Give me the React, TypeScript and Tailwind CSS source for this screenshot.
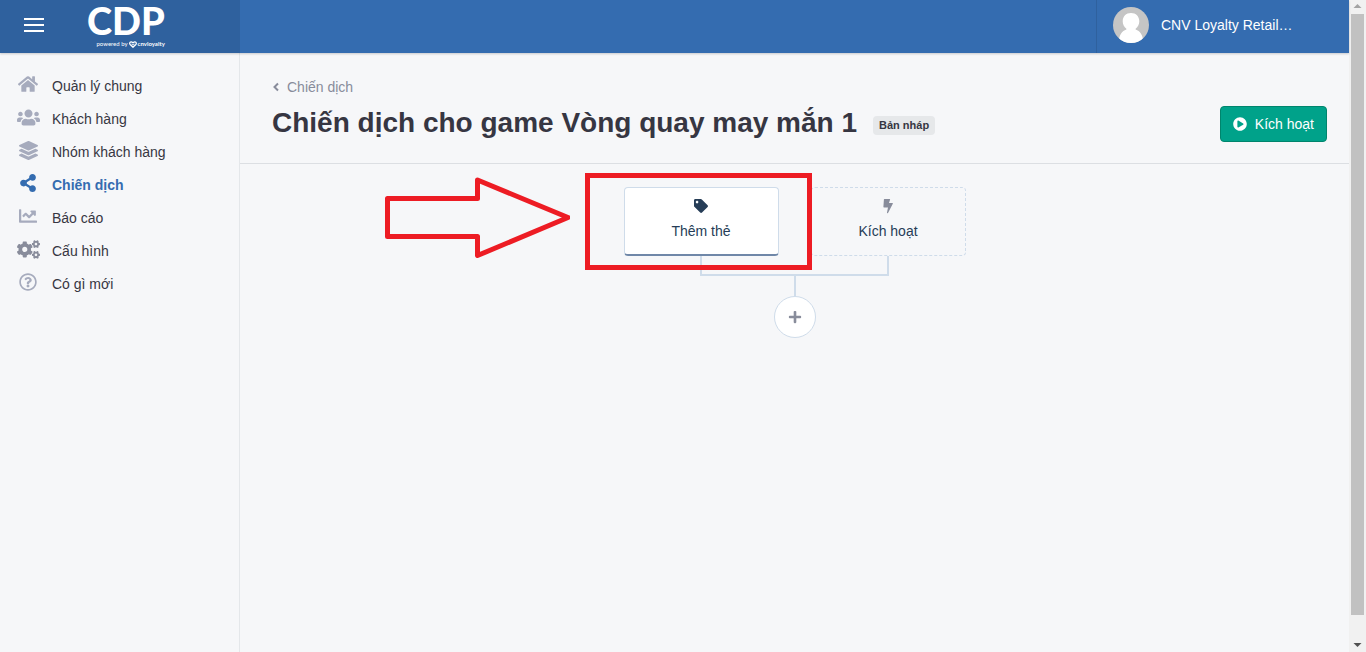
import React from "react";
import {
  FaHome,
  FaUsers,
  FaLayerGroup,
  FaShareAlt,
  FaChartLine,
  FaCogs,
  FaRegQuestionCircle,
  FaTag,
  FaPlus,
  FaPlayCircle,
} from "react-icons/fa";
import type { IconType } from "react-icons";

type NavItem = { label: string; icon: IconType; iconClass: string; active?: boolean };

const navItems: NavItem[] = [
  { label: "Quản lý chung", icon: FaHome, iconClass: "size-5 text-[#a6abbd]" },
  { label: "Khách hàng", icon: FaUsers, iconClass: "size-[23px] text-[#a6abbd]" },
  { label: "Nhóm khách hàng", icon: FaLayerGroup, iconClass: "size-[19px] text-[#a6abbd]" },
  { label: "Chiến dịch", icon: FaShareAlt, iconClass: "size-[18px] text-[#346cb0]", active: true },
  { label: "Báo cáo", icon: FaChartLine, iconClass: "size-[18px] text-[#a6abbd]" },
  { label: "Cấu hình", icon: FaCogs, iconClass: "size-[23px] text-[#888c9b]" },
  { label: "Có gì mới", icon: FaRegQuestionCircle, iconClass: "size-[18px] text-[#a6abbd]" },
];

function Logo() {
  return (
    <a href="#" className="flex flex-col items-end font-['Lato',sans-serif] text-white">
      <span className="text-[38px] leading-10 font-black">CDP</span>
      <span className="flex items-center text-[6px] leading-[8px]">
        powered by
        <svg viewBox="0 0 16 14" className="mx-px h-[7px] w-2" aria-hidden>
          <path
            d="M8 12.500 2.300 7C.5 5 1.200 2 4 1.700c1.800-.1 3 .9 4 2 1-1.100 2.200-2.100 4-2C14.800 2 15.500 5 13.700 7z"
            fill="none"
            stroke="#fff"
            strokeWidth="2.500"
          />
          <path d="M5 5.500 8 8.500l3-3" fill="none" stroke="#fff" strokeWidth="2" />
        </svg>
        <b className="font-bold">cnvloyalty</b>
      </span>
    </a>
  );
}

function Header() {
  return (
    <header className="relative z-10 flex h-[53px] bg-[#346cb0] shadow-[0_1px_2px_rgba(20,20,31,0.2)]">
      <div className="flex w-60 shrink-0 items-center bg-[#2f619e] pl-6">
        <button type="button" aria-label="Menu" className="flex w-5 flex-col gap-1 pb-[3px]">
          <span className="h-0.5 w-5 bg-white" />
          <span className="h-0.5 w-5 bg-white" />
          <span className="h-0.5 w-5 bg-white" />
        </button>
        <div className="ml-[43px] pb-[5px]">
          <Logo />
        </div>
      </div>
      <button
        type="button"
        className="ml-auto flex w-[253px] items-center gap-3 border-l border-[#2f619e] pb-[3px] pl-4 text-left text-sm font-medium text-white"
      >
        <svg viewBox="0 0 36 36" className="size-9 shrink-0 rounded-full" aria-hidden>
          <rect width="36" height="36" fill="#c5c5c5" />
          <path
            d="M18 6c-5 0-8.300 3.500-8.300 8.300 0 3.200 1.400 5.700 3.700 7.400v.8C9 24 6 28 5.500 36h25c-.5-8-3.500-12-7.900-13.500v-.8c2.300-1.700 3.700-4.200 3.700-7.400C26.300 9.500 23 6 18 6z"
            fill="#fff"
          />
        </svg>
        <span>CNV Loyalty Retail…</span>
      </button>
    </header>
  );
}

function Sidebar() {
  return (
    <nav className="w-60 shrink-0 border-r border-[#e4e7ea] pt-4">
      <ul>
        {navItems.map(({ label, icon: Icon, iconClass, active }) => (
          <li key={label}>
            <a
              href="#"
              className={
                active
                  ? "flex h-[33px] items-center pl-4 font-bold text-[#346cb0]"
                  : "flex h-[33px] items-center pl-4 text-[#363642]"
              }
            >
              <span className="mr-3 flex w-6 justify-center pb-[3px]">
                <Icon className={iconClass} aria-hidden />
              </span>
              {label}
            </a>
          </li>
        ))}
      </ul>
    </nav>
  );
}

function BoltIcon() {
  return (
    <svg viewBox="0 0 10 16" className="h-4 w-[10px]" aria-hidden>
      <path
        d="M1.400 1h5.200c.4 0 .6.3.5.6L6 5h3.300c.5 0 .7.4.5.8L5 14.900c-.3.600-1.200.3-1-.3L5 9.500H1c-.4 0-.6-.3-.6-.7L.9 1.500c0-.3.2-.5.500-.5z"
        fill="#888c9b"
      />
    </svg>
  );
}

function Annotation() {
  return (
    <>
      <div className="pointer-events-none absolute -top-[14px] -left-[39px] h-[97px] w-[227px] border-[5px] border-[#ed1c24]" />
      <svg
        viewBox="0 0 186 82"
        className="pointer-events-none absolute -top-[10px] -left-[240px] h-[82px] w-[186px]"
        aria-hidden
      >
        <path
          d="M3.500 21.500h90V3L184 40.500 93.500 78.500v-19h-90z"
          fill="none"
          stroke="#ed1c24"
          strokeWidth="5"
          strokeLinejoin="round"
        />
      </svg>
    </>
  );
}

function Flow() {
  return (
    <section className="flex flex-col items-center pt-[23px]">
      <div className="relative flex gap-8">
        <button
          type="button"
          className="flex h-[69px] w-[155px] flex-col items-center rounded border border-b-2 border-[#cfdcea] border-b-[#6f87a8] bg-white pt-[10px] text-[#263d57]"
        >
          <span className="flex h-4 items-center">
            <FaTag className="size-[14px]" aria-hidden />
          </span>
          <span className="mt-[7px] leading-5">Thêm thẻ</span>
        </button>
        <button
          type="button"
          className="flex h-[69px] w-[155px] flex-col items-center rounded border border-dashed border-[#cfdcea] pt-[10px] text-[#263d57]"
        >
          <BoltIcon />
          <span className="mt-[7px] leading-5">Kích hoạt</span>
        </button>
        <Annotation />
      </div>
      <div className="-z-10 h-5 w-[189px] border-x-2 border-b-2 border-[#cfdcea]" />
      <div className="h-5 w-0.5 bg-[#cfdcea]" />
      <button
        type="button"
        aria-label="Thêm"
        className="flex size-[42px] items-center justify-center rounded-full border border-[#cfdcea] bg-white text-[#888c9b]"
      >
        <FaPlus className="size-[14px]" aria-hidden />
      </button>
    </section>
  );
}

function Scrollbar() {
  return (
    <div className="flex w-[17px] shrink-0 flex-col items-center bg-[#f1f1f1]" aria-hidden>
      <svg viewBox="0 0 17 14" className="h-[14px] w-[17px]">
        <path d="M4.500 8h8l-4-4z" fill="#a3a3a3" />
      </svg>
      <div className="w-[13px] flex-1 bg-[#c1c1c1]" />
      <svg viewBox="0 0 17 37" className="h-[37px] w-[17px]">
        <path d="M4.500 28h8l-4 4z" fill="#505050" />
      </svg>
    </div>
  );
}

export default function App() {
  return (
    <div className="isolate flex min-h-screen bg-[#f6f7f9] font-['Liberation_Sans',Arial,sans-serif] text-sm text-[#363642]">
      <div className="flex min-w-0 flex-1 flex-col">
        <Header />
        <div className="flex flex-1">
          <Sidebar />
          <main className="min-w-0 flex-1">
            <div className="flex items-center justify-between border-b border-[#dcdfe3] pt-6 pr-[22px] pb-[14px] pl-8">
              <div>
                <a href="#" className="flex h-5 items-center gap-[7px] text-[#888c9b]">
                  <svg viewBox="0 0 8 10" className="h-[10px] w-2" aria-hidden>
                    <path d="M6 1.500 2.500 5 6 8.500" fill="none" stroke="currentColor" strokeWidth="2" />
                  </svg>
                  Chiến dịch
                </a>
                <div className="flex h-[52px] items-center gap-4">
                  <h1 className="pb-px text-[28px] leading-9 font-bold">Chiến dịch cho game Vòng quay may mắn 1</h1>
                  <span className="mt-1 rounded bg-[#e6e8ea] px-1.5 text-[11px] leading-[19px] font-bold">
                    Bản nháp
                  </span>
                </div>
              </div>
              <button
                type="button"
                className="mt-[22px] flex h-9 items-center gap-2 rounded border border-[#00856d] bg-[#00a28a] px-3 font-medium text-white"
              >
                <FaPlayCircle className="size-[14px]" aria-hidden />
                Kích hoạt
              </button>
            </div>
            <Flow />
          </main>
        </div>
      </div>
      <Scrollbar />
    </div>
  );
}
